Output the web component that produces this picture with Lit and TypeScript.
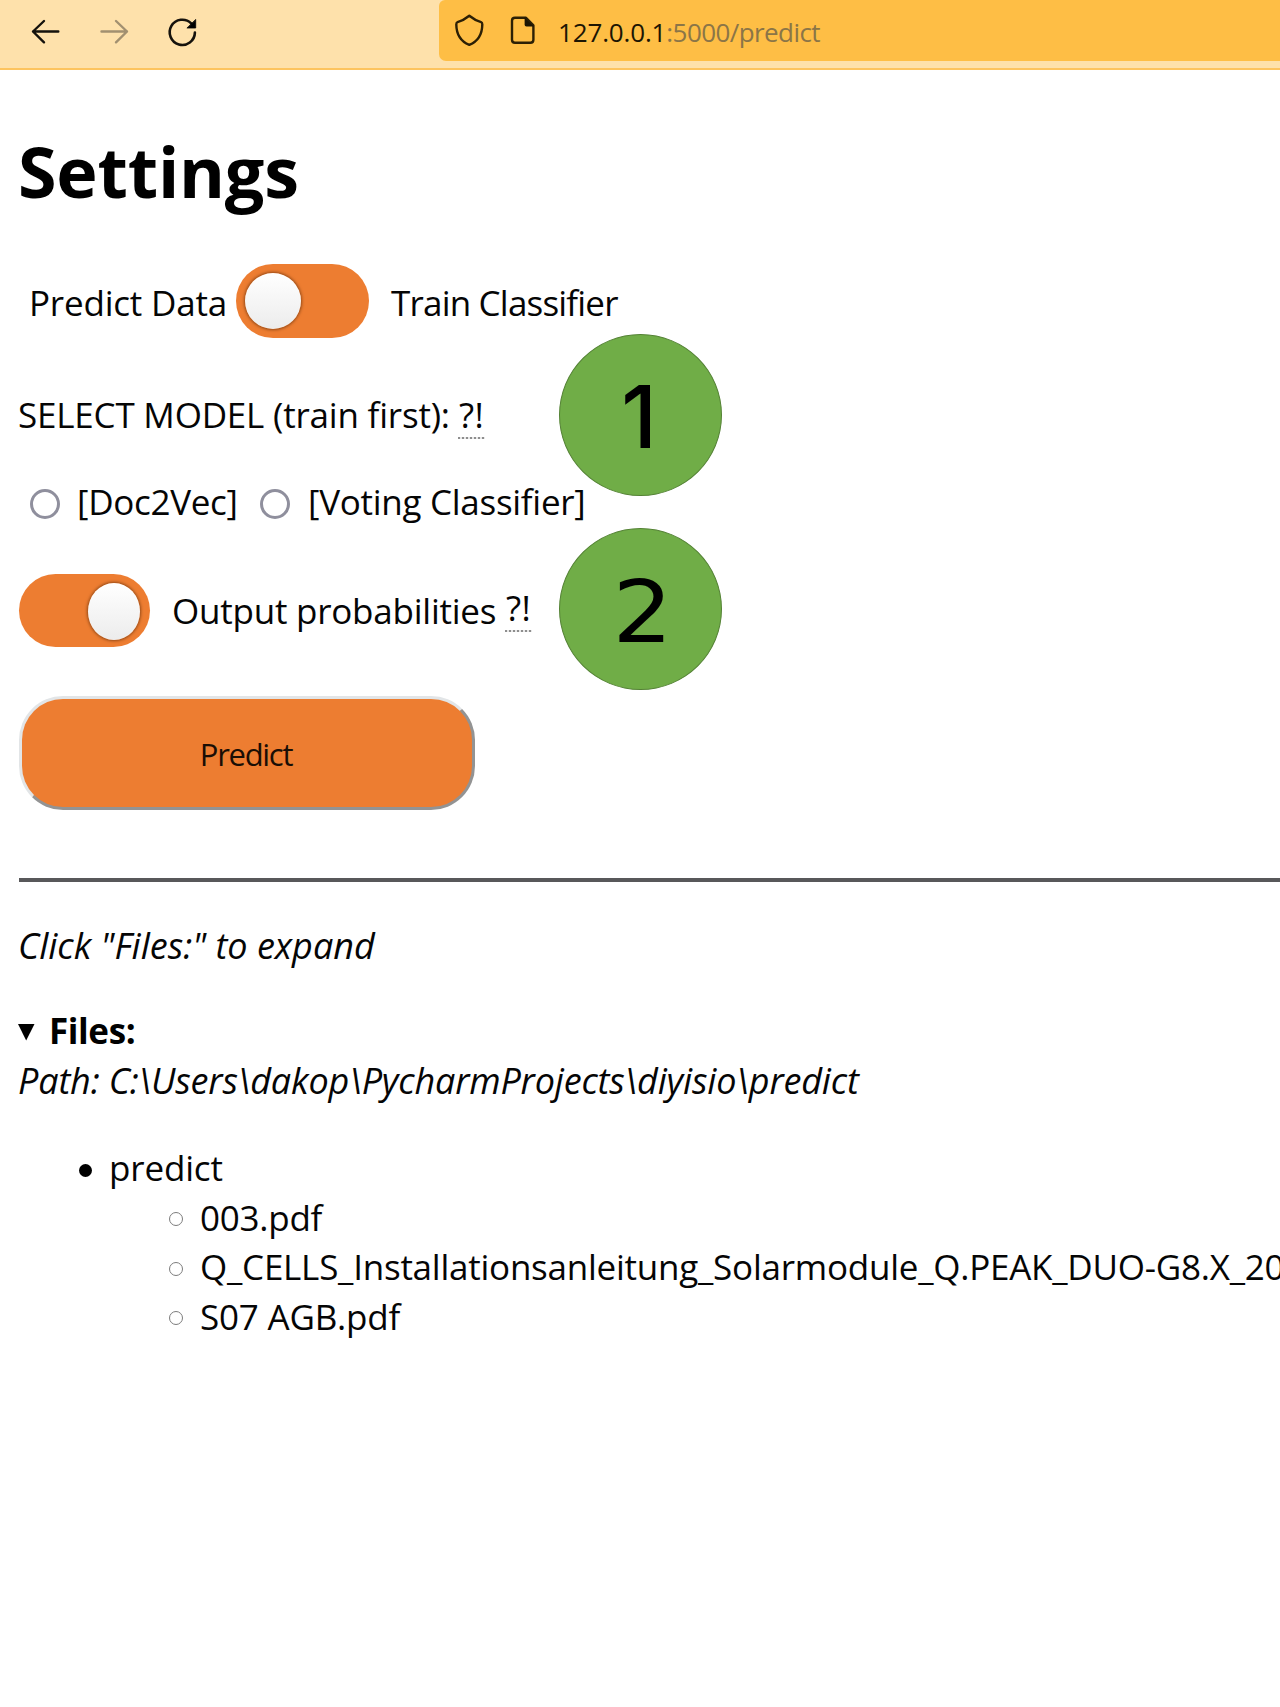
import { LitElement, html, css } from "lit";
import { customElement, property } from "lit/decorators.js";
import { classMap } from "lit/directives/class-map.js";

@customElement("toggle-switch")
class ToggleSwitch extends LitElement {
  @property({ type: Boolean }) on = false;
  static styles = css`
    :host { display: block; flex: none; }
    .track { box-sizing: border-box; display: flex; align-items: center; width: 133px; height: 74px; padding: 0 9px 0; border-radius: 37px; background: #ed7d31; }
    .track.on { width: 131px; height: 73px; padding: 1px 10px 0; justify-content: flex-end; }
    .knob { width: 56px; height: 56px; border-radius: 50%; background: linear-gradient(#ffffff, #ececec); box-shadow: 0 0 3px 1px rgba(70, 30, 0, 0.55); }
    .on .knob { width: 52px; height: 57px; }
  `;
  render() {
    return html`<div class=${classMap({ track: true, on: this.on })}><div class="knob"></div></div>`;
  }
}

@customElement("browser-bar")
class BrowserBar extends LitElement {
  static styles = css`
    :host { display: block; flex: none; }
    .bar { box-sizing: border-box; display: flex; align-items: flex-start; height: 70px; background: #fee1ab; border-bottom: 2px solid #fdc45f; }
    .nav { display: flex; width: 439px; flex: none; }
    svg { display: block; flex: none; }
    .address { display: flex; align-items: flex-start; flex: 1; height: 61px; background: #febe45; border-radius: 6px 0 0 7px; overflow: hidden; }
    .url { padding-left: 14px; font-size: 26px; line-height: 65px; white-space: nowrap; color: #8b7547; letter-spacing: -0.58px; }
    .host { color: #1c1503; letter-spacing: -0.15px; }
  `;
  render() {
    return html`<div class="bar">
      <div class="nav">
        <svg width="220" height="64" viewBox="0 0 220 64" fill="none" stroke-width="2.4" stroke-linecap="round" stroke-linejoin="round">
          <path stroke="#15120c" d="M58.3 31.5H33M44 21L33 31.5L44 42.3"/>
          <path stroke="#a29070" d="M101.5 31.5H127M116 21L127 31.5L116 42.3"/>
          <path stroke="#15120c" stroke-width="2.6" d="M194.9 32.6A12.6 12.6 0 1 1 191.2 23.4"/>
          <path fill="#000" d="M195.7 19.8V28H187.3Z" stroke="#000" stroke-width=".8"/>
        </svg>
      </div>
      <div class="address">
        <svg width="105" height="60" viewBox="439 0 105 60" fill="none" stroke="#2c2005" stroke-width="2.4" stroke-linejoin="round">
          <path d="M469.3 15.8C465.6 18.8 461.6 21 457.5 22.2C456.5 22.5 456.3 23.3 456.3 24.4C456.4 33.2 460 41 469.3 44.8C478.6 41 482.2 33.2 482.3 24.4C482.3 23.3 482.1 22.5 481.1 22.2C477 21 473 18.8 469.3 15.8Z"/>
          <path d="M515 17.8H526L533.4 25.4V39.8Q533.4 42.8 530.4 42.8H515Q512 42.8 512 39.8V20.8Q512 17.8 515 17.8Z"/>
          <path fill="#1c1503" stroke="none" d="M524.6 17.4L534 26.4H526.5Q524.6 26.4 524.6 24.4Z"/>
        </svg>
        <div class="url"><span class="host">127.0.0.1</span>:5000/predict</div>
      </div>
    </div>`;
  }
}

@customElement("app-root")
class AppRoot extends LitElement {
  static styles = css`
    :host { display: block; font-family: "Open Sans", "Noto Sans", sans-serif; color: #050505; }
    .page { position: relative; display: flex; flex-direction: column; width: 100%; height: 1707px; overflow: hidden; background: #fff; font-size: 35px; line-height: 50px; white-space: nowrap; letter-spacing: -0.2px; }
    .content { display: flex; flex-direction: column; align-items: flex-start; padding: 53px 0 0 19px; }
    h1 { margin: 0 0 0 -1px; font-size: 70px; line-height: 96px; font-weight: 700; letter-spacing: -0.2px; color: #000; }
    .row { display: flex; align-items: center; }
    .mode { height: 74px; margin-top: 45px; padding-left: 10px; }
    .mode span { padding-top: 3px; }
    .predict-data { width: 207px; letter-spacing: -0.2px; }
    .train { padding-left: 22px; letter-spacing: -0.8px; }
    .select { height: 50px; margin-top: 52px; margin-left: -1px; }
    .select-label { width: 441px; }
    abbr { position: relative; display: block; width: 25px; letter-spacing: 0.4px; text-decoration: none; }
    abbr::after { content: ""; position: absolute; left: -1px; right: -1px; bottom: 1px; height: 2px; background: repeating-linear-gradient(90deg, #8e8e8e 0 2px, #e9e9e9 2px 4px); }
    .models { height: 50px; margin-top: 37px; padding-left: 11px; }
    .radio { box-sizing: border-box; width: 30px; height: 30px; margin-top: 3px; border: 3px solid #8f8f9d; border-radius: 50%; background: #fff; }
    .doc { width: 183px; padding-left: 17px; letter-spacing: -0.3px; }
    .voting { padding-left: 18px; letter-spacing: -0.28px; }
    .output { height: 73px; margin-top: 47px; }
    .output-label { width: 334px; padding-left: 22px; letter-spacing: -0.23px; }
    .output abbr { margin-top: -6px; }
    .button { box-sizing: border-box; display: flex; align-items: center; justify-content: center; width: 456px; height: 114px; margin-top: 49px; padding: 2px 2px 0 0; border: 3px solid; border-color: #e2e5e7 #939393 #939393 #e2e5e7; border-radius: 44px; background: #ed7d31; color: #1a0e05; font: inherit; font-size: 31px; letter-spacing: -1.3px; }
    .rule { width: 1261px; height: 4px; margin-top: 68px; background: #58585a; }
    .hint { margin-top: 39px; margin-left: -1px; font-style: italic; font-size: 36px; letter-spacing: 0; }
    .summary { margin-top: 35px; font-weight: 700; letter-spacing: -0.4px; color: #000; gap: 14px; }
    .arrow { display: block; margin-top: 1px; margin-left: -1px; }
    .path { margin-left: -1px; font-style: italic; font-size: 36px; line-height: 49px; letter-spacing: -0.17px; }
    ul { margin: 0; padding: 0; list-style: none; line-height: 49.5px; }
    .tree { margin-top: 38px; padding-left: 60px; }
    .tree .row { gap: 17px; }
    .disc { width: 13px; height: 13px; margin-top: 5px; border-radius: 50%; background: #000; }
    .root-name { letter-spacing: -0.15px; }
    .files { padding-left: 90px; }
    .ring { box-sizing: border-box; width: 14px; height: 14px; margin-top: 4px; border: 1.5px solid #7c7c7c; border-radius: 50%; }
    .f0 { letter-spacing: -0.25px; }
    .f1 { letter-spacing: -0.24px; }
    .f2 { letter-spacing: -0.2px; }
    .badge { position: absolute; left: 559px; box-sizing: border-box; display: flex; align-items: center; justify-content: center; width: 163px; height: 162px; border: 1px solid #548235; border-radius: 50%; background: #70ad47; color: #000; font-size: 86px; line-height: 100px; letter-spacing: 0; }
    .one { top: 334px; font-family: Inter, sans-serif; font-weight: 500; }
    .two { top: 528px; font-family: "DejaVu Sans", sans-serif; }
    .one span { padding: 3px 3px 0 0; }
    .two span { padding: 5px 0 0 3px; transform: scaleX(1.1); }
  `;

  private files = ["003.pdf", "Q_CELLS_Installationsanleitung_Solarmodule_Q.PEAK_DUO-G8.X_20", "S07 AGB.pdf"];

  render() {
    return html`<div class="page">
      <browser-bar></browser-bar>
      <div class="content">
        <h1>Settings</h1>
        <div class="row mode">
          <span class="predict-data">Predict Data</span>
          <toggle-switch></toggle-switch>
          <span class="train">Train Classifier</span>
        </div>
        <div class="row select"><span class="select-label">SELECT MODEL (train first):</span><abbr>?!</abbr></div>
        <div class="row models">
          <span class="radio"></span><span class="doc">[Doc2Vec]</span>
          <span class="radio"></span><span class="voting">[Voting Classifier]</span>
        </div>
        <div class="row output">
          <toggle-switch on></toggle-switch>
          <span class="output-label">Output probabilities</span><abbr>?!</abbr>
        </div>
        <button class="button">Predict</button>
        <div class="rule"></div>
        <div class="hint">Click "Files:" to expand</div>
        <div class="row summary">
          <svg class="arrow" width="17" height="18" viewBox="0 0 17 18"><path d="M0 1H16.5L8.2 17.5Z"/></svg>
          <span>Files:</span>
        </div>
        <div class="path">Path: C:\\Users\\dakop\\PycharmProjects\\diyisio\\predict</div>
        <ul class="tree">
          <li>
            <div class="row"><span class="disc"></span><span class="root-name">predict</span></div>
            <ul class="files">
              ${this.files.map((f, i) => html`<li class="row"><span class="ring"></span><span class="f${i}">${f}</span></li>`)}
            </ul>
          </li>
        </ul>
      </div>
      <div class="badge one"><span>1</span></div>
      <div class="badge two"><span>2</span></div>
    </div>`;
  }
}
